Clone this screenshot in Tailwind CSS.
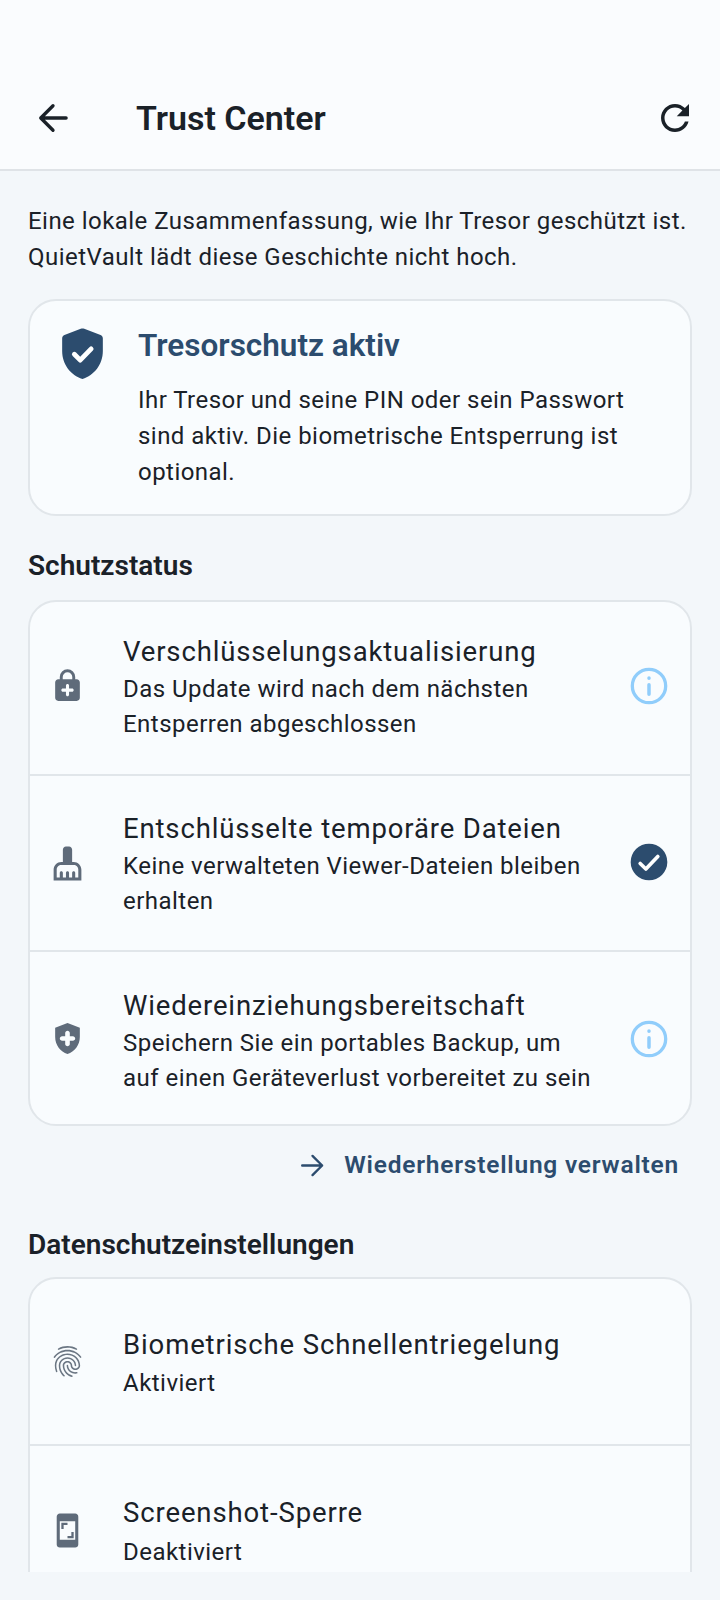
<!doctype html>
<html lang="en">
  <head>
    <meta charset="UTF-8" />
    <meta name="viewport" content="width=device-width, initial-scale=1.0" />
    <title>Trust Center</title>
    <script src="https://cdn.jsdelivr.net/npm/@tailwindcss/browser@4"></script>
  </head>
  <body class="h-[1600px] overflow-hidden bg-[#f3f7fa] font-['Roboto',sans-serif] text-[#1a2128]">
    <header class="flex h-[171px] items-end border-b-2 border-[#dfe3e7] bg-[#fafcfe] pb-[30px] pl-[32px] pr-[24px]">
      <svg class="h-[42px] w-[42px] fill-none stroke-[#1a2128]" viewBox="0 0 24 24" stroke-width="1.900" stroke-linecap="round" stroke-linejoin="round"><path d="M19.500 12H5M12 5l-7 7 7 7" /></svg>
      <h1 class="ml-[62px] flex-1 text-[34px] font-semibold leading-[42px]">Trust Center</h1>
      <svg class="h-[42px] w-[42px] fill-[#1a2128]" viewBox="0 0 24 24"><path d="M17.650 6.350C16.200 4.900 14.210 4 12 4c-4.420 0-7.990 3.580-7.990 8s3.570 8 7.990 8c3.730 0 6.840-2.550 7.730-6h-2.080c-.82 2.330-3.040 4-5.650 4-3.310 0-6-2.690-6-6s2.690-6 6-6c1.660 0 3.140.69 4.220 1.780L13 11h7V4l-2.350 2.350z" /></svg>
    </header>

    <main class="h-[1401px] overflow-hidden px-[28px] pt-[32px]">
      <p class="text-[24px] leading-[36px] tracking-[0.46px]">Eine lokale Zusammenfassung, wie Ihr Tresor geschützt ist.<br />QuietVault lädt diese Geschichte nicht hoch.</p>

      <section class="mt-[24px] flex h-[217px] rounded-[28px] border-2 border-[#e1e6ea] bg-[#f9fcfe] pl-[22px] pt-[22px]">
        <svg class="h-[61px] w-[61px] shrink-0" viewBox="0 0 24 24"><path class="fill-[#2c4c6e]" d="M11.300 2.300 4.900 4.700C4.400 4.900 4 5.400 4 6v5.100c0 5 3.400 9.600 8 10.900 4.600-1.300 8-5.900 8-10.900V6c0-.6-.4-1.100-.9-1.300l-6.400-2.400c-.5-.2-.9-.2-1.400 0z" /><path class="fill-none stroke-white" stroke-width="1.900" stroke-linecap="round" stroke-linejoin="round" d="M8.800 12.300l2.300 2.300 4.300-4.400" /></svg>
        <div class="ml-[25px] w-[530px]">
          <h2 class="mt-[5px] text-[31.5px] font-semibold leading-[36px] text-[#2c4c6e]">Tresorschutz aktiv</h2>
          <p class="mt-[18px] text-[24px] leading-[36px] tracking-[0.46px]">Ihr Tresor und seine PIN oder sein Passwort sind aktiv. Die biometrische Entsperrung ist optional.</p>
        </div>
      </section>

      <h3 class="mt-[33px] text-[28px] font-semibold leading-[34px]">Schutzstatus</h3>

      <section class="mt-[17px] rounded-[28px] border-2 border-[#e1e6ea] bg-[#f9fcfe]">
        <div class="flex h-[174px] items-center border-b-2 border-[#e1e6ea] pl-[19px] pr-[19px]">
          <svg class="mb-[6px] h-[37px] w-[37px] shrink-0 fill-[#5f6b7a]" viewBox="0 0 24 24"><path d="M18 8h-1V6.500a5 5 0 0 0-10 0V8H6c-1.100 0-2 .9-2 2v10c0 1.100.9 2 2 2h12c1.100 0 2-.9 2-2V10c0-1.100-.9-2-2-2zM8.900 6.500a3.100 3.100 0 0 1 6.200 0V8H8.900V6.500zM15 16h-2v2c0 .55-.45 1-1 1s-1-.45-1-1v-2H9c-.55 0-1-.45-1-1s.45-1 1-1h2v-2c0-.55.45-1 1-1s1 .45 1 1v2h2c.55 0 1 .45 1 1s-.45 1-1 1z" /></svg>
          <div class="ml-[37px] flex-1">
            <div class="text-[27.5px] leading-[36px] tracking-[0.85px]">Verschlüsselungsaktualisierung</div>
            <div class="mt-[2px] text-[24px] leading-[35px] tracking-[0.47px]">Das Update wird nach dem nächsten<br />Entsperren abgeschlossen</div>
          </div>
          <svg class="mb-[4px] h-[44px] w-[44px] shrink-0" viewBox="0 0 24 24"><circle class="fill-none stroke-[#90cdfb]" cx="12" cy="12" r="9.100" stroke-width="1.800" /><path class="fill-none stroke-[#90cdfb]" stroke-width="1.900" stroke-linecap="round" d="M12 11.300v5.200M12 7.600v.2" /></svg>
        </div>
        <div class="flex h-[176px] items-center border-b-2 border-[#e1e6ea] pl-[19px] pr-[19px]">
          <svg class="h-[37px] w-[37px] shrink-0 fill-[#5f6b7a]" viewBox="0 0 24 24"><path d="M16 11h-1V3c0-1.100-.9-2-2-2h-2c-1.100 0-2 .9-2 2v8H8c-2.760 0-5 2.240-5 5v7h18v-7c0-2.760-2.240-5-5-5zm3 10h-2v-3c0-.55-.45-1-1-1s-1 .45-1 1v3h-2v-3c0-.55-.45-1-1-1s-1 .45-1 1v3H9v-3c0-.55-.45-1-1-1s-1 .45-1 1v3H5v-5c0-1.650 1.350-3 3-3h8c1.650 0 3 1.350 3 3v5z" /></svg>
          <div class="ml-[37px] flex-1 pt-[4px]">
            <div class="text-[27.5px] leading-[36px] tracking-[0.85px]">Entschlüsselte temporäre Dateien</div>
            <div class="mt-[2px] text-[24px] leading-[35px] tracking-[0.47px]">Keine verwalteten Viewer-Dateien bleiben<br />erhalten</div>
          </div>
          <svg class="mb-[2px] h-[44px] w-[44px] shrink-0" viewBox="0 0 24 24"><circle class="fill-[#2c4c6e]" cx="12" cy="12" r="10" /><path class="fill-none stroke-white" stroke-width="2" stroke-linecap="round" stroke-linejoin="round" d="M7.200 12.800l3.100 3 6.500-6.800" /></svg>
        </div>
        <div class="flex h-[172px] items-center pl-[19px] pr-[19px]">
          <svg class="h-[37px] w-[37px] shrink-0 fill-[#5f6b7a]" viewBox="0 0 24 24"><path d="M12 2 4 5v6.090c0 5.050 3.410 9.760 8 10.910 4.590-1.150 8-5.860 8-10.910V5l-8-3zm3.500 11.500h-2v2c0 .8-.7 1.500-1.500 1.500s-1.500-.7-1.500-1.500v-2h-2C7.700 13.500 7 12.800 7 12s.7-1.500 1.500-1.500h2v-2C10.500 7.700 11.200 7 12 7s1.500.7 1.500 1.500v2h2c.8 0 1.500.7 1.500 1.500s-.7 1.500-1.500 1.500z" /></svg>
          <div class="ml-[37px] flex-1 pt-[8px]">
            <div class="text-[27.5px] leading-[36px] tracking-[0.85px]">Wiedereinziehungsbereitschaft</div>
            <div class="mt-[2px] text-[24px] leading-[35px] tracking-[0.47px]">Speichern Sie ein portables Backup, um<br />auf einen Geräteverlust vorbereitet zu sein</div>
          </div>
          <svg class="mt-[2px] h-[44px] w-[44px] shrink-0" viewBox="0 0 24 24"><circle class="fill-none stroke-[#90cdfb]" cx="12" cy="12" r="9.100" stroke-width="1.800" /><path class="fill-none stroke-[#90cdfb]" stroke-width="1.900" stroke-linecap="round" d="M12 11.300v5.200M12 7.600v.2" /></svg>
        </div>
      </section>

      <a class="mt-[21px] flex items-center justify-end pr-[13px] text-[24.5px] font-semibold leading-[36px] tracking-[0.78px] text-[#2c4c6e]">
        <svg class="h-[33px] w-[33px] fill-none stroke-[#2c4c6e]" viewBox="0 0 24 24" stroke-width="1.700" stroke-linecap="round" stroke-linejoin="round"><path d="M4.500 12H19M12 5l7 7-7 7" /></svg>
        <span class="ml-[15px]">Wiederherstellung verwalten</span>
      </a>

      <h3 class="mt-[45px] text-[28px] font-semibold leading-[34px]">Datenschutzeinstellungen</h3>

      <section class="mt-[15px] h-[400px] rounded-[28px] border-2 border-[#e1e6ea] bg-[#f9fcfe]">
        <div class="flex h-[167px] items-center border-b-2 border-[#e1e6ea] pl-[19px] pr-[19px]">
          <svg class="h-[37px] w-[37px] shrink-0 fill-[#6b7683]" viewBox="0 0 24 24"><path d="M17.810 4.470c-.08 0-.16-.02-.23-.06C15.660 3.420 14 3 12.010 3c-1.980 0-3.860.47-5.570 1.410-.24.13-.54.04-.68-.2-.13-.24-.04-.55.2-.68C7.820 2.520 9.860 2 12.010 2c2.130 0 3.990.47 6.030 1.520.25.13.34.43.21.67-.09.18-.26.28-.44.28zM3.500 9.720c-.1 0-.2-.03-.29-.09-.23-.16-.28-.47-.12-.7.99-1.400 2.250-2.500 3.750-3.270C9.980 4.040 14 4.030 17.150 5.650c1.500.77 2.760 1.860 3.750 3.250.16.22.11.54-.12.7-.23.16-.54.11-.7-.12-.9-1.260-2.040-2.250-3.390-2.940-2.870-1.470-6.540-1.470-9.400.01-1.360.7-2.500 1.700-3.400 2.960-.08.14-.23.21-.39.21zm6.250 12.070c-.13 0-.26-.05-.35-.15-.87-.87-1.340-1.430-2.010-2.640-.69-1.230-1.050-2.730-1.050-4.340 0-2.970 2.540-5.390 5.660-5.390s5.660 2.420 5.660 5.390c0 .28-.22.5-.5.5s-.5-.22-.5-.5c0-2.420-2.090-4.390-4.660-4.390-2.570 0-4.660 1.970-4.660 4.390 0 1.440.32 2.770.93 3.850.64 1.150 1.080 1.640 1.850 2.420.19.2.19.51 0 .71-.11.1-.24.15-.37.15zm7.170-1.850c-1.190 0-2.240-.3-3.100-.89-1.490-1.010-2.380-2.650-2.380-4.390 0-.28.22-.5.5-.5s.5.22.5.5c0 1.410.72 2.740 1.940 3.560.71.48 1.540.71 2.540.71.24 0 .64-.03 1.040-.1.27-.05.53.13.58.41.05.27-.13.53-.41.58-.57.11-1.070.12-1.210.12zM14.910 22c-.04 0-.09-.01-.13-.02-1.590-.44-2.630-1.030-3.720-2.100-1.400-1.390-2.170-3.240-2.170-5.220 0-1.620 1.380-2.940 3.080-2.940 1.700 0 3.080 1.320 3.080 2.940 0 1.070.93 1.940 2.080 1.940s2.080-.87 2.080-1.940c0-3.770-3.250-6.830-7.250-6.830-2.840 0-5.440 1.580-6.610 4.030-.39.81-.59 1.760-.59 2.800 0 .78.07 2.010.67 3.610.1.26-.03.55-.29.64-.26.1-.55-.04-.64-.29-.49-1.310-.73-2.610-.73-3.960 0-1.200.23-2.290.68-3.240 1.330-2.790 4.280-4.600 7.510-4.600 4.550 0 8.250 3.510 8.250 7.830 0 1.620-1.380 2.940-3.080 2.940s-3.080-1.320-3.080-2.940c0-1.070-.93-1.940-2.080-1.940s-2.080.87-2.080 1.940c0 1.710.66 3.310 1.870 4.510.95.94 1.860 1.460 3.270 1.850.27.07.42.35.35.61-.05.23-.26.38-.47.38z" /></svg>
          <div class="ml-[37px] flex-1 pt-[5px]">
            <div class="text-[27.5px] leading-[36px] tracking-[0.88px]">Biometrische Schnellentriegelung</div>
            <div class="mt-[3px] text-[24px] leading-[35px] tracking-[0.47px]">Aktiviert</div>
          </div>
        </div>
        <div class="flex h-[172px] items-center pl-[19px] pr-[19px]">
          <svg class="mb-[3px] h-[37px] w-[37px] shrink-0 fill-[#5f6b7a]" viewBox="0 0 24 24"><path d="M17 1.010 7 1c-1.100 0-2 .9-2 2v18c0 1.100.9 2 2 2h10c1.100 0 2-.9 2-2V3c0-1.100-.9-1.990-2-1.990zM17 18H7V6h10v12zM9.500 8.500H12V7H8v4h1.500V8.500zM12 17h4v-4h-1.500v2.500H12V17z" /></svg>
          <div class="ml-[37px] flex-1">
            <div class="text-[27.5px] leading-[36px] tracking-[0.88px]">Screenshot-Sperre</div>
            <div class="mt-[4px] text-[24px] leading-[35px] tracking-[0.47px]">Deaktiviert</div>
          </div>
        </div>
      </section>
    </main>
  </body>
</html>
